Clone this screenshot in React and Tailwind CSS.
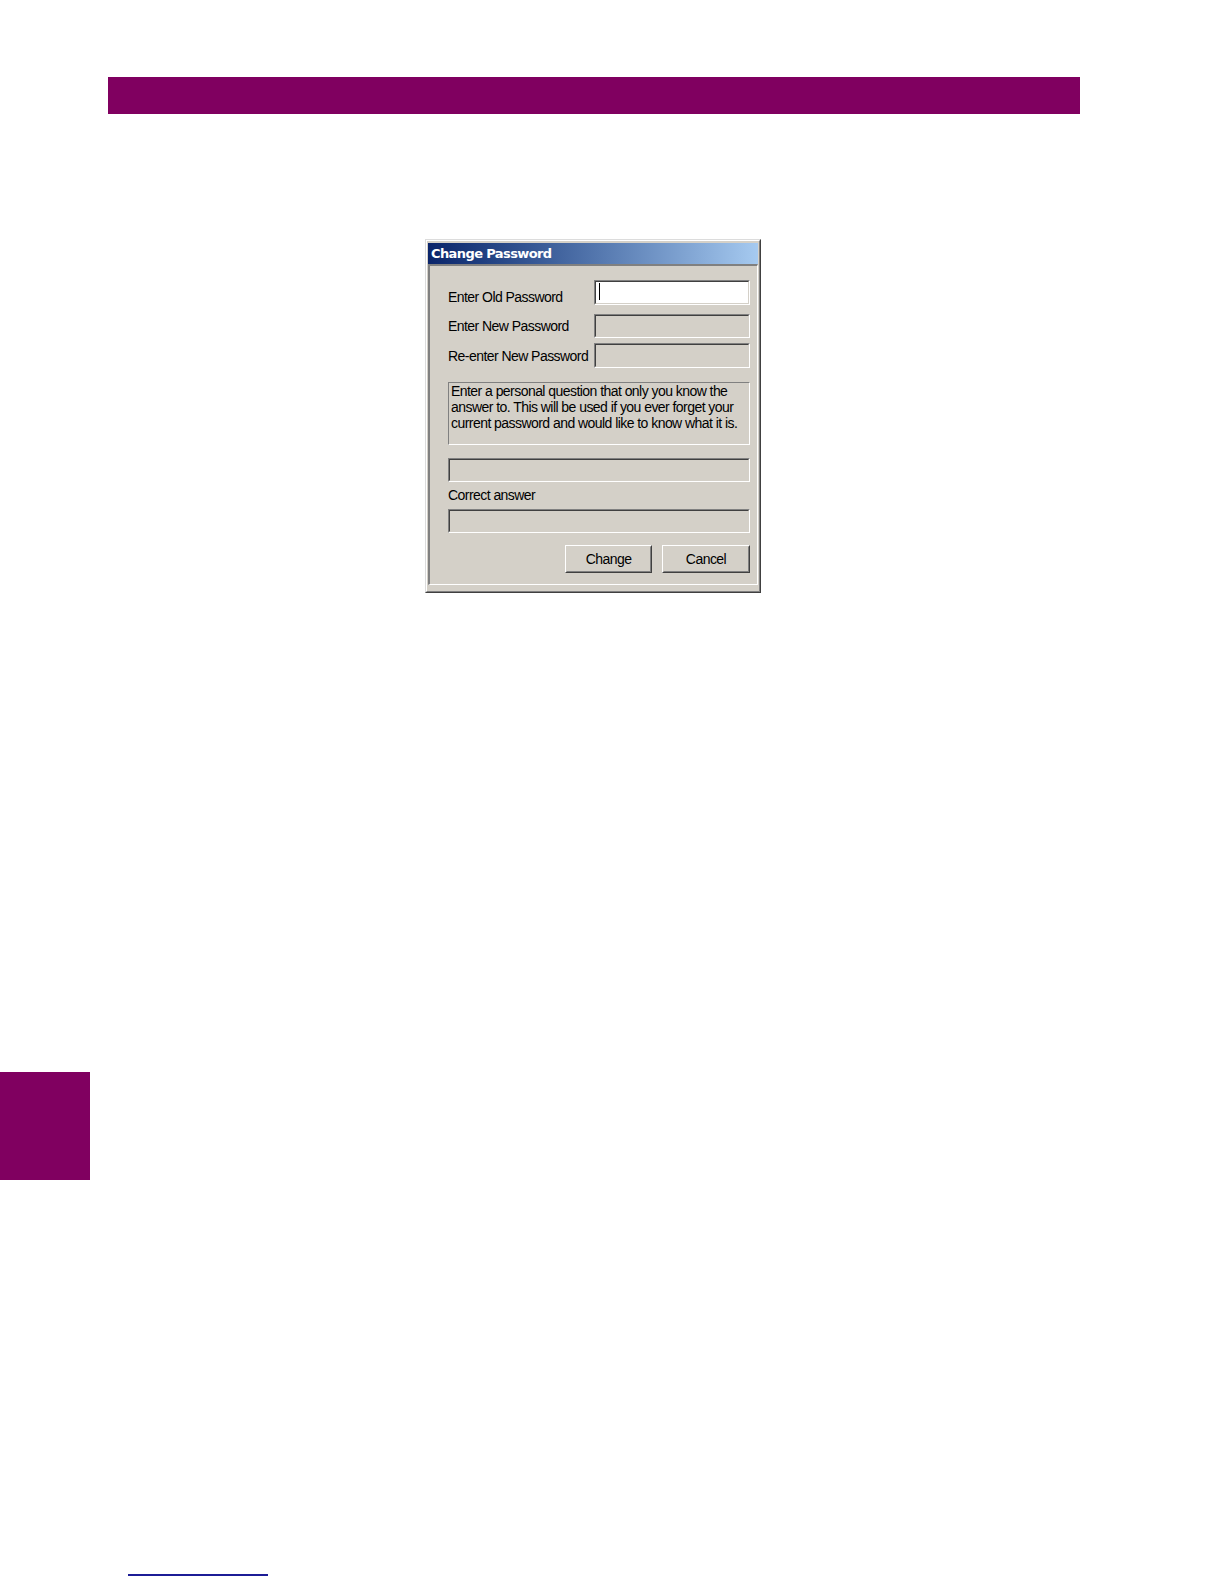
import React from 'react'

function Field({ className = '', white = false, children }) {
  return (
    <div className={`border border-t-[#808080] border-l-[#808080] border-r-white border-b-white ${className}`}>
      <div
        className={`h-full border border-t-[#404040] border-l-[#404040] border-r-[#d4d0c8] border-b-[#d4d0c8] ${
          white ? 'bg-white' : 'bg-[#d4d0c8]'
        }`}
      >
        {children}
      </div>
    </div>
  )
}

function Button({ className = '', children }) {
  return (
    <div className={`h-[28px] border border-t-white border-l-white border-r-[#404040] border-b-[#404040] bg-[#d4d0c8] ${className}`}>
      <div className="h-full border border-t-[#d4d0c8] border-l-[#d4d0c8] border-r-[#808080] border-b-[#808080] flex items-center justify-center">
        {children}
      </div>
    </div>
  )
}

function ChangePasswordDialog() {
  return (
    <div className="w-[336px] h-[354px] border border-t-[#dcdcdc] border-l-[#dcdcdc] border-r-[#404040] border-b-[#404040] bg-[#d4d0c8]">
      <div className="h-full flex flex-col border border-t-white border-l-white border-r-[#808080] border-b-[#808080] pt-[2px] px-px pb-[6px]">
        {/* title bar */}
        <div className="h-[21px] flex items-center pl-[3px] bg-gradient-to-r from-[#0a246a] to-[#a6caf0]">
          <span className="text-white font-bold text-[13px] tracking-[-0.6px] font-['DejaVu_Sans',Tahoma,sans-serif]">
            Change Password
          </span>
        </div>

        {/* body */}
        <div className="flex-1 flex flex-col border-t-2 border-l-2 border-t-[#808080] border-l-[#808080] border-r border-b border-r-white border-b-white pl-[18px] pr-[7px] pt-[14px] text-black text-[14px] tracking-[-0.55px] leading-[16px] font-['Liberation_Sans',Arial,sans-serif]">
          <div className="flex items-end h-[25px]">
            <div className="flex-1">Enter Old Password</div>
            <Field white className="w-[156px] h-[25px]">
              <div className="ml-[3px] mt-px w-px h-[17px] bg-black" />
            </Field>
          </div>
          <div className="flex items-center h-[24px] mt-[9px]">
            <div className="flex-1">Enter New Password</div>
            <Field className="w-[156px] h-[24px]" />
          </div>
          <div className="flex items-center h-[25px] mt-[5px]">
            <div className="flex-1">Re-enter New Password</div>
            <Field className="w-[156px] h-[25px]" />
          </div>

          <div className="mt-[14px] h-[63px] border border-t-[#808080] border-l-[#808080] border-r-white border-b-white px-[2px]">
            Enter a personal question that only you know the answer to. This will be used if you ever forget your
            current password and would like to know what it is.
          </div>

          <Field className="mt-[13px] h-[24px]" />
          <div className="mt-[5px]">Correct answer</div>
          <Field className="mt-[6px] h-[24px]" />

          <div className="mt-[12px] flex justify-end gap-[10px]">
            <Button className="w-[87px]">Change</Button>
            <Button className="w-[88px]">Cancel</Button>
          </div>
        </div>
      </div>
    </div>
  )
}

export default function App() {
  return (
    <div className="w-[1224px] h-[1584px] bg-white overflow-hidden">
      <div className="pt-[77px]">
        <div className="ml-[108px] w-[972px] h-[37px] bg-[#800060]" />
      </div>

      <div className="mt-[125px] ml-[425px]">
        <ChangePasswordDialog />
      </div>

      {/* chapter thumb tab */}
      <div className="mt-[479px] w-[90px] h-[108px] bg-[#800060]" />

      {/* footer rule */}
      <div className="mt-[394px] ml-[128px] w-[140px] h-[2px] bg-[#1c1c96]" />
    </div>
  )
}
